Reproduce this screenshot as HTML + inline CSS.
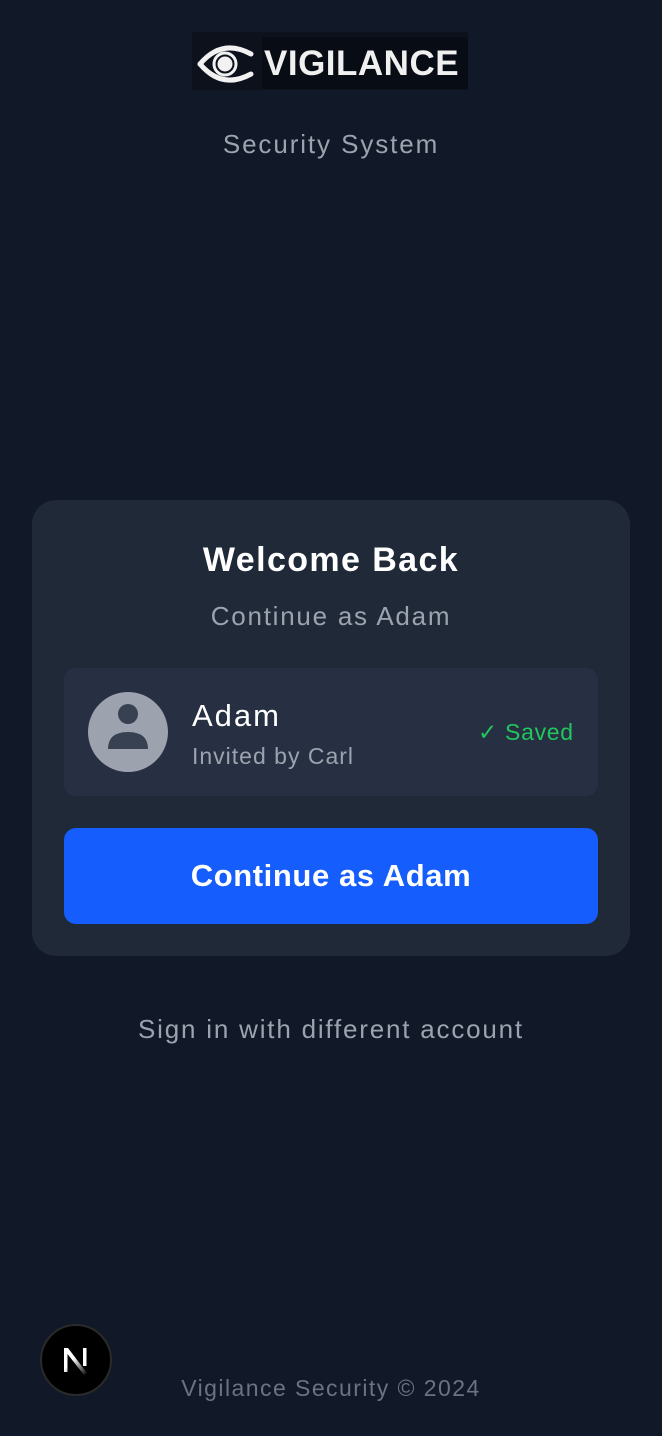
<!DOCTYPE html>
<html><head><meta charset="utf-8"><style>
*{margin:0;padding:0;box-sizing:border-box}
html,body{width:662px;height:1436px;background:#111827;overflow:hidden;font-family:"Liberation Sans",sans-serif}
.abs{position:absolute}
</style></head><body>
<div class="abs" style="left:192px;top:32px;width:276px;height:58px;background:#0c111c"></div>
<div class="abs" style="left:262px;top:37px;width:206px;height:52px;background:#080c15"></div>
<svg class="abs" style="left:196px;top:40px" width="58" height="48" viewBox="0 0 58 48">
<path d="M4 24 Q26 -2 55 14" stroke="#f2f2f2" stroke-width="5" fill="none" stroke-linecap="round"/>
<path d="M4 24 Q26 50 55 34" stroke="#f2f2f2" stroke-width="5" fill="none" stroke-linecap="round"/>
<circle cx="29" cy="24" r="11" fill="none" stroke="#f2f2f2" stroke-width="3"/>
<circle cx="29" cy="24" r="7.5" fill="#f2f2f2"/>
</svg>
<div class="abs" style="left:264px;top:41px;width:204px;font-size:35px;font-weight:bold;color:#f0f0f0;letter-spacing:0.5px;line-height:46px">VIGILANCE</div>
<div class="abs" style="left:0;top:128px;width:662px;text-align:center;font-size:26px;color:#9ca3af;line-height:32px;letter-spacing:1.9px">Security System</div>

<div class="abs" style="left:32px;top:500px;width:598px;height:456px;background:#1f2937;border-radius:24px"></div>
<div class="abs" style="left:0;top:540px;width:662px;text-align:center;font-size:34px;font-weight:bold;color:#fff;line-height:40px;letter-spacing:1.4px">Welcome Back</div>
<div class="abs" style="left:0;top:600px;width:662px;text-align:center;font-size:26px;color:#9ca3af;line-height:32px;letter-spacing:1.75px">Continue as Adam</div>

<div class="abs" style="left:64px;top:668px;width:534px;height:128px;background:#263042;border-radius:12px"></div>
<svg class="abs" style="left:88px;top:692px" width="80" height="80" viewBox="0 0 80 80">
<circle cx="40" cy="40" r="40" fill="#9ca3af"/>
<circle cx="40" cy="22" r="10" fill="#374151"/>
<path d="M20 57 Q20 40 40 40 Q60 40 60 57 Z" fill="#374151"/>
</svg>
<div class="abs" style="left:192px;top:697px;font-size:31px;color:#fff;line-height:38px;letter-spacing:2px">Adam</div>
<div class="abs" style="left:192px;top:741px;font-size:23px;color:#9ca3af;line-height:30px;letter-spacing:1px">Invited by Carl</div>
<div class="abs" style="left:478px;top:717px;font-size:23px;color:#22c55e;line-height:30px;letter-spacing:0.7px">✓ Saved</div>

<div class="abs" style="left:64px;top:828px;width:534px;height:96px;background:#155dfc;border-radius:12px;text-align:center;font-size:31px;font-weight:bold;color:#fff;line-height:96px;letter-spacing:0.6px">Continue as Adam</div>

<div class="abs" style="left:0;top:1013px;width:662px;text-align:center;font-size:26px;color:#9ca3af;line-height:32px;letter-spacing:1.8px">Sign in with different account</div>
<div class="abs" style="left:0;top:1373px;width:662px;text-align:center;font-size:23px;color:#6b7280;line-height:30px;letter-spacing:1.45px">Vigilance Security © 2024</div>

<svg class="abs" style="left:40px;top:1324px" width="72" height="72" viewBox="0 0 72 72">
<circle cx="36" cy="36" r="35" fill="#000" stroke="#2a2a2a" stroke-width="2"/>
<defs><linearGradient id="g" x1="0" y1="0" x2="1" y2="1"><stop offset="0.4" stop-color="#fff"/><stop offset="1" stop-color="#fff" stop-opacity="0"/></linearGradient></defs>
<path d="M24 24 V48 H27.5 V30 L44 51 L47 49 L28 24 Z" fill="url(#g)"/>
<rect x="43" y="24" width="3.5" height="18" fill="#fff"/>
</svg>
</body></html>
